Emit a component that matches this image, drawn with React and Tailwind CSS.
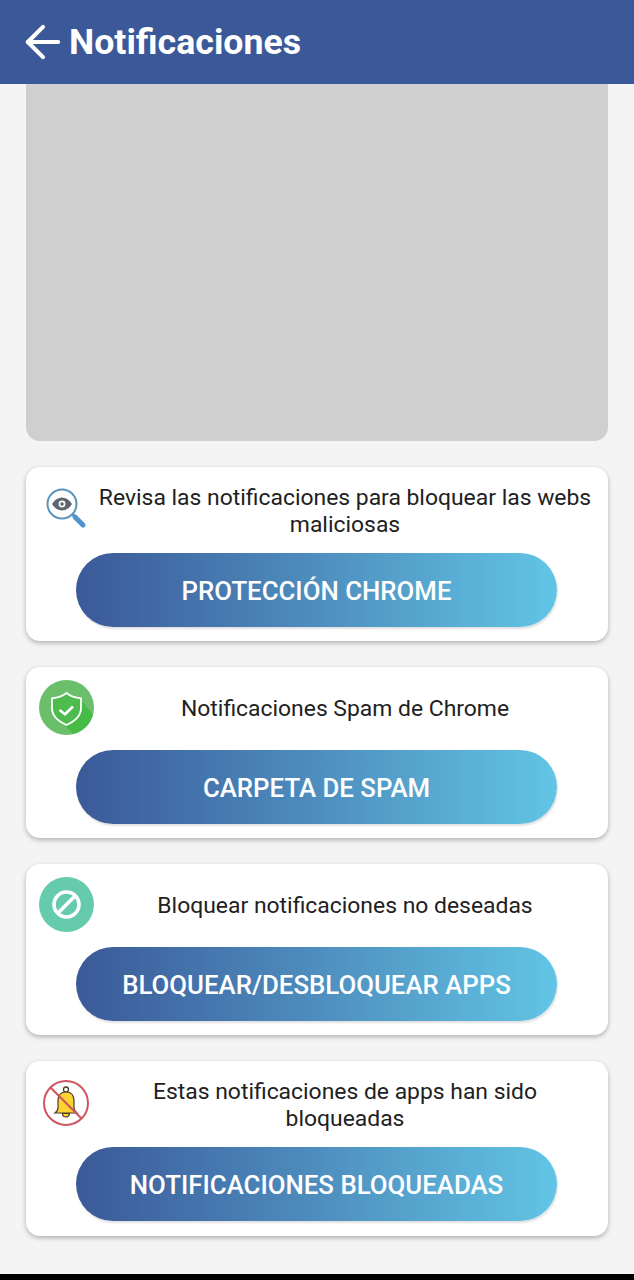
import { ArrowLeft } from "lucide-react";

const cards = [
  {
    text: "Revisa las notificaciones para bloquear las webs maliciosas",
    button: "PROTECCIÓN CHROME",
    icon: <SearchEyeIcon />,
    rowClass: "pt-[17px] pb-[15px]",
    cardClass: "h-[174px]",
    textClass: "",
  },
  {
    text: "Notificaciones Spam de Chrome",
    button: "CARPETA DE SPAM",
    icon: <ShieldIcon />,
    rowClass: "pt-[13px] pb-[15px]",
    cardClass: "h-[171px]",
    textClass: "pt-[1px]",
  },
  {
    text: "Bloquear notificaciones no deseadas",
    button: "BLOQUEAR/DESBLOQUEAR APPS",
    icon: <BlockIcon />,
    rowClass: "pt-[13px] pb-[15px]",
    cardClass: "h-[171px]",
    textClass: "pt-[1px]",
  },
  {
    text: "Estas notificaciones de apps han sido bloqueadas",
    button: "NOTIFICACIONES BLOQUEADAS",
    icon: <BellOffIcon />,
    rowClass: "pt-[17px] pb-[15px]",
    cardClass: "h-[175px]",
    textClass: "",
  },
];

export default function App() {
  return (
    <div className="w-[634px] h-[1280px] flex flex-col bg-[#f4f4f4] overflow-hidden font-['Roboto',sans-serif]">
      {/* HEADER */}
      <header className="h-[84px] shrink-0 bg-[#3b5998] flex items-center pl-[17px] text-white">
        <ArrowLeft size={52} strokeWidth={1.9} />
        <h1 className="text-[35.7px] font-bold leading-none pt-[1px]">Notificaciones</h1>
      </header>

      <main className="flex-1 px-[26px] flex flex-col">
        {/* AD PLACEHOLDER */}
        <div className="h-[357px] bg-[#cfcfcf] rounded-b-[14px] mb-[26px]" />

        {/* CARDS */}
        <div className="flex flex-col gap-[26px]">
          {cards.map((card) => (
            <Card key={card.button} {...card} />
          ))}
        </div>
      </main>

      <div className="h-[6px] shrink-0 bg-black" />
    </div>
  );
}

function Card({ text, button, icon, rowClass, cardClass, textClass }) {
  return (
    <section className={`${cardClass} bg-white rounded-[14px] shadow-[0_2px_5px_rgba(0,0,0,0.28)]`}>
      <div className={`${rowClass} flex`}>
        <div className="w-[68px] shrink-0 flex items-start justify-end">{icon}</div>
        <p className={`${textClass} w-[502px] self-center text-center text-[22.9px] leading-[27px] text-[#212121] px-[3px]`}>
          {text}
        </p>
      </div>
      <div className="px-[50px]">
        <button className="w-[481px] h-[74px] rounded-full bg-gradient-to-r from-[#3b5998] to-[#62c5e5] text-white text-[25.8px] font-medium pt-[3px] shadow-[1px_2px_2px_rgba(0,0,0,0.12)]">
          {button}
        </button>
      </div>
    </section>
  );
}

function SearchEyeIcon() {
  return (
    <svg width="44" height="44" viewBox="0 0 44 44" className="mr-[5px] mt-[3px]">
      <circle cx="17" cy="17" r="14.5" fill="#fff" stroke="#5b93bd" strokeWidth="2" />
      <path d="M27 27l4 4" stroke="#5b93bd" strokeWidth="2.5" />
      <path d="M30 30l8 8" stroke="#4f94cf" strokeWidth="5" strokeLinecap="round" />
      <path d="M7 17c3-4.500 6.500-6.500 10-6.500s7 2 10 6.500c-3 4.500-6.500 6.500-10 6.500S10 21.500 7 17z" fill="#5c6670" />
      <circle cx="17" cy="17" r="3.4" fill="#fff" />
      <circle cx="17" cy="17" r="1.8" fill="#5c6670" />
    </svg>
  );
}

function ShieldIcon() {
  return (
    <svg width="55" height="55" viewBox="0 0 55 55">
      <circle cx="27.5" cy="27.5" r="27.5" fill="#6bbf6b" />
      <path d="M42 20l12 15a27.5 27.5 0 0 1-20 19L24 43z" fill="#46bb46" />
      <path
        d="M27.5 13c4 3.300 9 4.800 14.500 5.300v9.700c0 7.500-5.500 13-14.500 17-9-4-14.500-9.500-14.500-17v-9.700c5.500-.5 10.500-2 14.500-5.300z"
        fill="#4dbb4d"
        stroke="#fff"
        strokeWidth="1.8"
      />
      <path d="M20.500 30l5.500 4.200 8-7.700" fill="none" stroke="#fff" strokeWidth="2.600" />
    </svg>
  );
}

function BlockIcon() {
  return (
    <svg width="55" height="55" viewBox="0 0 55 55">
      <circle cx="27.5" cy="27.5" r="27.5" fill="#66cbad" />
      <circle cx="27.5" cy="27.5" r="12.5" fill="none" stroke="#fff" strokeWidth="3.6" />
      <path d="M18.5 36.5l18-18" stroke="#fff" strokeWidth="3.6" />
    </svg>
  );
}

function BellOffIcon() {
  return (
    <svg width="48" height="48" viewBox="0 0 48 48" className="mr-[4px] mt-[1px]">
      <circle cx="24" cy="24" r="22" fill="#fff" stroke="#cf5660" strokeWidth="2" />
      <circle cx="24" cy="10.500" r="2.500" fill="none" stroke="#4a3b2a" strokeWidth="1.300" />
      <path d="M24 13c-6 0-8 4-8 9v7c0 3-1.500 4-3 5h22c-1.500-1-3-2-3-5v-7c0-5-2-9-8-9z" fill="#fdd32f" stroke="#4a3b2a" strokeWidth="1.200" />
      <path d="M20.500 34.500a3.500 3.500 0 0 0 7 0z" fill="#fdd32f" stroke="#4a3b2a" strokeWidth="1.200" />
      <path d="M8.500 8.500l31 31" stroke="#cf5660" strokeWidth="2.200" />
    </svg>
  );
}
